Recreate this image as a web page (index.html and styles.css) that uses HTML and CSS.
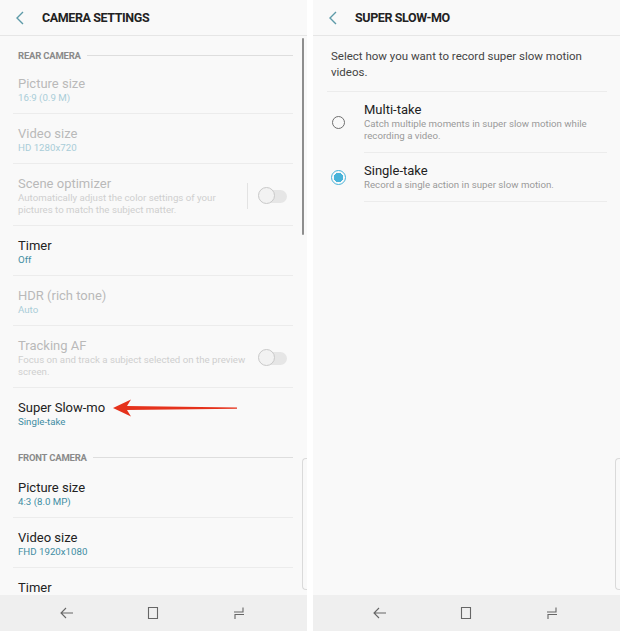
FILE: index.html
```html
<!DOCTYPE html>
<html lang="en">
<head>
    <meta charset="UTF-8">
    <meta name="viewport" content="width=device-width, initial-scale=1.0">
    <title>Camera settings</title>
    <link rel="stylesheet" href="styles.css">
</head>
<body>
    <div class="screens">
        <!-- Ecran 1 : réglages caméra -->
        <section class="panel">
            <header class="topbar">
                <svg class="back" width="8" height="14" viewBox="0 0 8 14"><path d="M7 1 1 7l6 6" fill="none" stroke="currentColor" stroke-width="1.4"/></svg>
                <h1>Camera settings</h1>
            </header>
            <div class="content">
                <div class="section-title section-first"><span>Rear camera</span></div>
                <div class="row disabled">
                    <div class="text">
                        <div class="title">Picture size</div>
                        <div class="sub">16:9 (0.9 M)</div>
                    </div>
                </div>
                <div class="row disabled">
                    <div class="text">
                        <div class="title">Video size</div>
                        <div class="sub">HD 1280x720</div>
                    </div>
                </div>
                <div class="row disabled">
                    <div class="text">
                        <div class="title">Scene optimizer</div>
                        <div class="desc">Automatically adjust the color settings of your<br>pictures to match the subject matter.</div>
                    </div>
                    <span class="vsep"></span>
                    <span class="switch"></span>
                </div>
                <div class="row">
                    <div class="text">
                        <div class="title">Timer</div>
                        <div class="sub">Off</div>
                    </div>
                </div>
                <div class="row disabled">
                    <div class="text">
                        <div class="title">HDR (rich tone)</div>
                        <div class="sub">Auto</div>
                    </div>
                </div>
                <div class="row disabled">
                    <div class="text">
                        <div class="title">Tracking AF</div>
                        <div class="desc">Focus on and track a subject selected on the preview<br>screen.</div>
                    </div>
                    <span class="switch"></span>
                </div>
                <div class="row no-line">
                    <div class="text">
                        <div class="title">Super Slow-mo</div>
                        <div class="sub">Single-take</div>
                    </div>
                </div>
                <div class="section-title"><span>Front camera</span></div>
                <div class="row">
                    <div class="text">
                        <div class="title">Picture size</div>
                        <div class="sub">4:3 (8.0 MP)</div>
                    </div>
                </div>
                <div class="row">
                    <div class="text">
                        <div class="title">Video size</div>
                        <div class="sub">FHD 1920x1080</div>
                    </div>
                </div>
                <div class="row">
                    <div class="text">
                        <div class="title">Timer</div>
                    </div>
                </div>
            </div>
            <span class="scrollbar"></span>
            <span class="edge-handle"></span>
            <svg class="pointer" width="130" height="22" viewBox="0 0 130 22">
                <polygon points="2,11 20,2.5 16,9 126,10.4 126,11.8 16,13 20,19.5" fill="#e5321c"/>
            </svg>
            <nav class="navbar">
                <svg width="14" height="14" viewBox="0 0 14 14"><path d="M6 2 1 7l5 5M1 7h12" fill="none" stroke="currentColor" stroke-width="1.1"/></svg>
                <svg width="14" height="14" viewBox="0 0 14 14"><path d="M2.5 1.5h9v11h-9z" fill="none" stroke="currentColor" stroke-width="1.1"/></svg>
                <svg width="14" height="14" viewBox="0 0 14 14"><path d="M11 1.5v4.5H2M3 13V8.5h9" fill="none" stroke="currentColor" stroke-width="1.1"/></svg>
            </nav>
        </section>

        <!-- Ecran 2 : super ralenti -->
        <section class="panel">
            <header class="topbar">
                <svg class="back" width="8" height="14" viewBox="0 0 8 14"><path d="M7 1 1 7l6 6" fill="none" stroke="currentColor" stroke-width="1.4"/></svg>
                <h1>Super Slow-mo</h1>
            </header>
            <div class="content">
                <p class="intro">Select how you want to record super slow motion<br>videos.</p>
                <label class="option">
                    <span class="radio"></span>
                    <span class="option-text">
                        <span class="title">Multi-take</span>
                        <span class="desc">Catch multiple moments in super slow motion while<br>recording a video.</span>
                    </span>
                </label>
                <label class="option">
                    <span class="radio checked"></span>
                    <span class="option-text">
                        <span class="title">Single-take</span>
                        <span class="desc">Record a single action in super slow motion.</span>
                    </span>
                </label>
            </div>
            <span class="edge-handle"></span>
            <nav class="navbar">
                <svg width="14" height="14" viewBox="0 0 14 14"><path d="M6 2 1 7l5 5M1 7h12" fill="none" stroke="currentColor" stroke-width="1.1"/></svg>
                <svg width="14" height="14" viewBox="0 0 14 14"><path d="M2.5 1.5h9v11h-9z" fill="none" stroke="currentColor" stroke-width="1.1"/></svg>
                <svg width="14" height="14" viewBox="0 0 14 14"><path d="M11 1.5v4.5H2M3 13V8.5h9" fill="none" stroke="currentColor" stroke-width="1.1"/></svg>
            </nav>
        </section>
    </div>
</body>
</html>
```

FILE: styles.css
```css
body, html {
    margin: 0;
    padding: 0;
    background: #ffffff;
    font-family: Roboto, 'Noto Sans', sans-serif;
    color: #222;
}
.screens {
    display: flex;
    gap: 6px;
    height: 631px;
}
.panel {
    position: relative;
    width: 307px;
    height: 631px;
    background-color: #f9f9f9;
    display: flex;
    flex-direction: column;
    overflow: hidden;
}
.topbar {
    height: 35px;
    flex-shrink: 0;
    display: flex;
    align-items: center;
    padding-left: 16px;
    border-bottom: 1px solid #e6e6e6;
}
.topbar .back {
    color: #5d9aa8;
    margin-right: 18px;
}
.topbar h1 {
    margin: 0;
    font-size: 12.5px;
    font-weight: 700;
    letter-spacing: -0.4px;
    text-transform: uppercase;
    color: #222;
}
.content {
    flex-grow: 1;
    overflow: hidden;
}
.section-title {
    display: flex;
    align-items: center;
    height: 30px;
    padding: 0 14px 0 18px;
    box-sizing: border-box;
    padding-top: 8px;
    font-size: 9.5px;
    font-weight: 700;
    letter-spacing: -0.2px;
    text-transform: uppercase;
    color: #8a8a8a;
}
.section-first {
    height: 28px;
    padding-top: 10px;
}
.section-title::after {
    content: '';
    flex-grow: 1;
    height: 1px;
    background-color: #dedede;
    margin-left: 6px;
}
.row {
    display: flex;
    align-items: center;
    margin: 0 14px 0 13px;
    padding: 12px 6px 9px 5px;
    border-bottom: 1px solid #ececec;
}
.row.no-line {
    border-bottom-color: transparent;
}
.row .text {
    flex-grow: 1;
}
.title {
    display: block;
    font-size: 13px;
    line-height: 16px;
    color: #222;
}
.sub {
    font-size: 9.7px;
    line-height: 12px;
    color: #3f8da3;
}
.desc {
    display: block;
    font-size: 9.7px;
    line-height: 12px;
    color: #999;
}
.row.disabled .title {
    color: #b9b9b9;
}
.row.disabled .sub {
    color: #a9cdd8;
}
.row.disabled .desc {
    color: #cfcfcf;
}
.vsep {
    width: 1px;
    height: 26px;
    background-color: #e3e3e3;
    margin-right: 12px;
}
.switch {
    position: relative;
    width: 27px;
    height: 13px;
    border-radius: 7px;
    background-color: #e6e6e6;
}
.switch::before {
    content: '';
    position: absolute;
    left: -2px;
    top: -2.5px;
    width: 15px;
    height: 15px;
    border-radius: 50%;
    background-color: #f2f2f2;
    border: 1px solid #c9c9c9;
}
.scrollbar {
    position: absolute;
    left: 302px;
    top: 38px;
    width: 2px;
    height: 197px;
    background-color: #8e8e8e;
    border-radius: 1px;
}
.edge-handle {
    position: absolute;
    left: 302px;
    top: 458px;
    width: 5px;
    height: 132px;
    border: 1px solid #dadada;
    border-right: none;
    border-radius: 4px 0 0 4px;
    box-sizing: border-box;
}
.pointer {
    position: absolute;
    left: 111px;
    top: 397px;
}
.navbar {
    height: 36px;
    flex-shrink: 0;
    background-color: #efefef;
    display: flex;
    align-items: center;
    justify-content: space-between;
    padding: 0 61px 0 60px;
    color: #666;
}
.intro {
    margin: 0 13px 0 14px;
    padding: 12px 4px 11px 4px;
    font-size: 11.5px;
    line-height: 16px;
    color: #444;
    border-bottom: 1px solid #ececec;
}
.option {
    display: flex;
    align-items: center;
}
.radio {
    width: 51px;
    display: flex;
    justify-content: center;
    flex-shrink: 0;
}
.radio::before {
    content: '';
    width: 13px;
    height: 13px;
    border-radius: 50%;
    border: 1.3px solid #6f6f6f;
    box-sizing: border-box;
}
.radio.checked::before {
    width: 15px;
    height: 15px;
    border: 1.5px solid #48b3d9;
    background: radial-gradient(circle, #48b3d9 0 4.5px, transparent 5px);
}
.option-text {
    flex-grow: 1;
    margin-right: 13px;
    padding: 10px 0;
    border-bottom: 1px solid #ececec;
}
```
